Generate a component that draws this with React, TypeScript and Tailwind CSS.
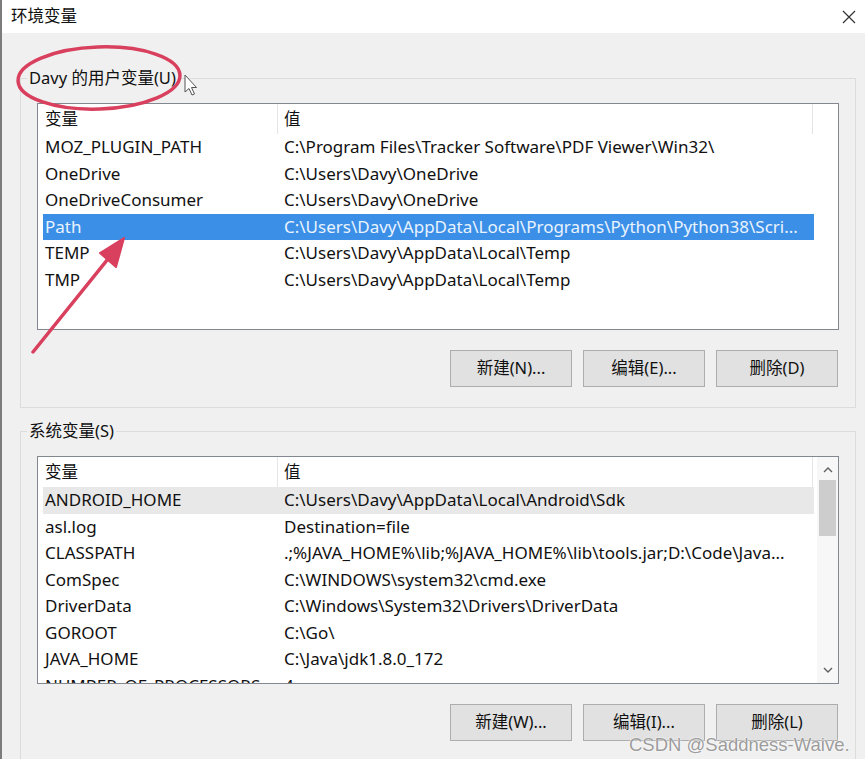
const userVars = [
  { name: 'MOZ_PLUGIN_PATH', value: 'C:\\Program Files\\Tracker Software\\PDF Viewer\\Win32\\' },
  { name: 'OneDrive', value: 'C:\\Users\\Davy\\OneDrive' },
  { name: 'OneDriveConsumer', value: 'C:\\Users\\Davy\\OneDrive' },
  { name: 'Path', value: 'C:\\Users\\Davy\\AppData\\Local\\Programs\\Python\\Python38\\Scri...', selected: true },
  { name: 'TEMP', value: 'C:\\Users\\Davy\\AppData\\Local\\Temp' },
  { name: 'TMP', value: 'C:\\Users\\Davy\\AppData\\Local\\Temp' },
]

const systemVars = [
  { name: 'ANDROID_HOME', value: 'C:\\Users\\Davy\\AppData\\Local\\Android\\Sdk', hover: true },
  { name: 'asl.log', value: 'Destination=file' },
  { name: 'CLASSPATH', value: '.;%JAVA_HOME%\\lib;%JAVA_HOME%\\lib\\tools.jar;D:\\Code\\Java...' },
  { name: 'ComSpec', value: 'C:\\WINDOWS\\system32\\cmd.exe' },
  { name: 'DriverData', value: 'C:\\Windows\\System32\\Drivers\\DriverData' },
  { name: 'GOROOT', value: 'C:\\Go\\' },
  { name: 'JAVA_HOME', value: 'C:\\Java\\jdk1.8.0_172' },
  { name: 'NUMBER_OF_PROCESSORS', value: '4' },
]

type Row = { name: string; value: string; selected?: boolean; hover?: boolean }

function ListHeader() {
  return (
    <div className="flex h-[30px] shrink-0 items-center text-[16.5px] text-[#111]">
      <div className="h-full w-[240px] border-r border-[#e5e5e5] pl-[7px] leading-[30px]">变量</div>
      <div className="h-full w-[535px] border-r border-[#e5e5e5] pl-[6px] leading-[30px]">值</div>
    </div>
  )
}

function ListRows({ rows }: { rows: Row[] }) {
  return (
    <>
      {rows.map((row) => (
        <div
          key={row.name}
          className={`ml-[5px] flex h-[26.5px] w-[771px] shrink-0 items-center whitespace-nowrap text-[17px] leading-[26px] ${
            row.selected
              ? 'bg-[#3b8fe6] text-[#e9f3ff]'
              : row.hover
              ? 'bg-[#e8e8e8] text-[#111]'
              : 'text-[#111]'
          }`}
        >
          <div className="w-[235px] pl-[2px]">{row.name}</div>
          <div className="pl-[6px]">{row.value}</div>
        </div>
      ))}
    </>
  )
}

function Buttons({ labels }: { labels: string[] }) {
  return (
    <div className="mt-[20px] flex justify-end gap-[11px] pr-[1px]">
      {labels.map((label) => (
        <button
          key={label}
          className="h-[37px] w-[122px] border border-[#adadad] bg-[#e1e1e1] text-[16.5px] text-[#111]"
        >
          {label}
        </button>
      ))}
    </div>
  )
}

function Chevron({ up }: { up?: boolean }) {
  return (
    <svg width="10" height="6" viewBox="0 0 10 6" className="mx-auto">
      <path
        d={up ? 'M1 5 L5 1 L9 5' : 'M1 1 L5 5 L9 1'}
        fill="none"
        stroke="#606060"
        strokeWidth="1.4"
      />
    </svg>
  )
}

export default function App() {
  return (
    <div className="relative h-[759px] w-[865px] overflow-hidden font-['Noto_Sans','Noto_Sans_CJK_SC',sans-serif]">
      <div className="h-full border-l-2 border-[#7c7c7c] bg-[#f0f0f0]">
        {/* title bar */}
        <div className="flex h-[33px] items-center justify-between bg-white pl-[9px] pr-[9px]">
          <span className="text-[16.5px] text-[#111]">环境变量</span>
          <svg width="14" height="14" viewBox="0 0 14 14">
            <path d="M1 1 L13 13 M13 1 L1 13" stroke="#333" strokeWidth="1.2" />
          </svg>
        </div>

        {/* user variables */}
        <fieldset className="ml-[18px] mt-[35px] w-[836px] border border-[#dcdcdc] pb-[20px] pt-[15px]">
          <legend className="ml-[6px] px-[2px] text-[16.5px] leading-[20px] text-[#111]">Davy 的用户变量(U)</legend>
          <div className="px-[16px]">
            <div className="flex h-[227px] flex-col overflow-hidden border border-[#828790] bg-white">
              <ListHeader />
              <ListRows rows={userVars} />
            </div>
            <Buttons labels={['新建(N)...', '编辑(E)...', '删除(D)']} />
          </div>
        </fieldset>

        {/* system variables */}
        <fieldset className="ml-[18px] mt-[13px] w-[836px] border border-[#dcdcdc] pb-[20px] pt-[15px]">
          <legend className="ml-[6px] px-[2px] text-[16.5px] leading-[20px] text-[#111]">系统变量(S)</legend>
          <div className="px-[16px]">
            <div className="flex h-[228px] border border-[#828790] bg-white">
              <div className="flex flex-1 flex-col overflow-hidden">
                <ListHeader />
                <ListRows rows={systemVars} />
              </div>
              <div className="flex w-[21px] flex-col bg-[#f7f7f7] py-[10px]">
                <Chevron up />
                <div className="mx-auto mt-[7px] h-[56px] w-[17px] bg-[#cdcdcd]" />
                <div className="flex-1" />
                <Chevron />
              </div>
            </div>
            <Buttons labels={['新建(W)...', '编辑(I)...', '删除(L)']} />
          </div>
        </fieldset>
      </div>

      {/* red annotation + mouse cursor */}
      <svg width="865" height="759" className="pointer-events-none absolute left-0 top-0">
        <ellipse cx="99" cy="78" rx="81" ry="31" fill="none" stroke="#d8405e" strokeWidth="3.5" transform="rotate(-2 99 78)" />
        <path d="M33 352 L116 249" stroke="#d8405e" strokeWidth="3.5" strokeLinecap="round" />
        <path d="M124 238 L100 253 L116 267 Z" fill="#d8405e" stroke="#d8405e" strokeWidth="2" strokeLinejoin="round" />
        <path d="M185 75 L185 92 L189 88.5 L192 95 L194.5 94 L191.5 87.5 L196.5 87.5 Z" fill="#fff" stroke="#555" strokeWidth="1" />
      </svg>

      {/* watermark */}
      <div className="absolute left-[629px] top-[731px] font-['Liberation_Sans',sans-serif] text-[18.5px] text-[#9c9c9c] [text-shadow:0_0_2px_#fff,0_0_1px_#fff]">
        CSDN @Saddness-Waive.
      </div>
    </div>
  )
}
